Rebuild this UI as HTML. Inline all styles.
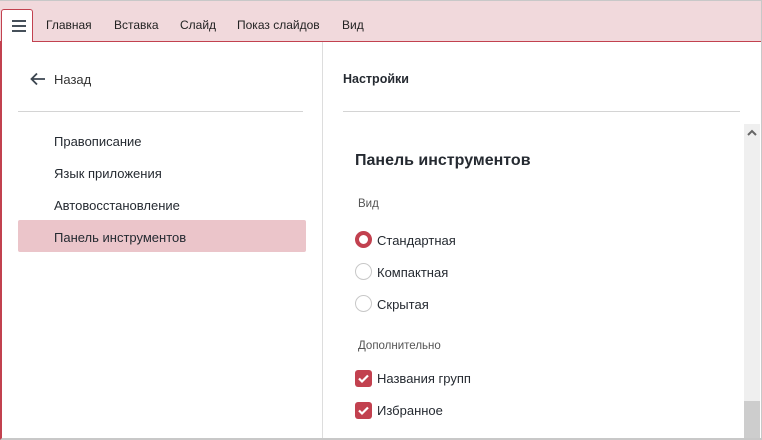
<!DOCTYPE html>
<html><head><meta charset="utf-8"><style>
*{margin:0;padding:0;box-sizing:border-box}
body{width:762px;height:440px;overflow:hidden;background:#fff;font-family:"Liberation Sans","DejaVu Sans",sans-serif;color:#252a31;position:relative}
.top{position:absolute;left:0;top:0;width:762px;height:42px;background:#f1d9dc;border-top:1px solid #c8c8c8;border-bottom:1px solid #c2414f}
.menu{position:absolute;left:1px;top:9px;width:32px;height:33px;background:#fff;border:1px solid #c2414f;border-bottom:none;border-radius:3px 3px 0 0}
.menu i{position:absolute;left:10px;width:14px;height:2px;background:#46505a}
.tab{position:absolute;top:18px;font-size:12px;color:#222}
.frame{position:absolute;left:0;top:42px;width:762px;height:398px;border-left:2px solid #c2414f;border-right:1px solid #c2414f;border-bottom:2px solid #c8c8c8}
.outer{position:absolute;right:0;top:0;width:1px;height:440px;background:#c8c8c8}
.vdiv{position:absolute;left:322px;top:42px;width:1px;height:396px;background:#ddd}
.hl{position:absolute;height:1px;background:#d4d4d4;top:111px}
.t{position:absolute;font-size:13px}
.sel{position:absolute;left:18px;top:220px;width:288px;height:32px;background:#ebc5ca;border-radius:2px}
.radio{position:absolute;left:355px;width:17px;height:17px;border-radius:50%;border:1px solid #c8c8c8;background:#fff}
.radio.on{border:4px solid #c2414f}
.cb{position:absolute;left:355px;width:17px;height:17px;border-radius:3px;background:#c2414f}
.sb{position:absolute;left:744px;top:124px;width:16px;height:314px;background:#efefef}
.thumb{position:absolute;left:744px;top:401px;width:16px;height:37px;background:#cdcdcd}
</style></head><body>
<div class="top"></div>
<div class="menu"><i style="top:10px"></i><i style="top:15px"></i><i style="top:20px"></i></div>
<div class="tab" style="left:46px">Главная</div>
<div class="tab" style="left:114px">Вставка</div>
<div class="tab" style="left:180px">Слайд</div>
<div class="tab" style="left:237px">Показ слайдов</div>
<div class="tab" style="left:342px">Вид</div>
<div class="frame"></div>
<div class="outer"></div>
<div class="vdiv"></div>
<svg style="position:absolute;left:30px;top:72px" width="16" height="14" viewBox="0 0 16 14"><path d="M15 7H2M7 1.5L1.5 7 7 12.5" fill="none" stroke="#3c4650" stroke-width="1.8"/></svg>
<div class="t" style="left:54px;top:72px;color:#333">Назад</div>
<div class="hl" style="left:18px;width:285px"></div>
<div class="t" style="left:343px;top:72px;font-weight:bold;font-size:12.5px">Настройки</div>
<div class="hl" style="left:343px;width:397px"></div>
<div class="sel"></div>
<div class="t" style="left:54px;top:134px">Правописание</div>
<div class="t" style="left:54px;top:166px">Язык приложения</div>
<div class="t" style="left:54px;top:198px">Автовосстановление</div>
<div class="t" style="left:54px;top:230px">Панель инструментов</div>
<div class="sb"></div>
<svg style="position:absolute;left:747px;top:129px" width="10" height="8" viewBox="0 0 10 8"><path d="M1 6L5 2 9 6" fill="none" stroke="#666" stroke-width="2"/></svg>
<div class="thumb"></div>
<div class="t" style="left:355px;top:152px;font-size:16px;font-weight:bold">Панель инструментов</div>
<div class="t" style="left:358px;top:198px;font-size:11.5px;color:#555">Вид</div>
<div class="radio on" style="top:231px"></div>
<div class="t" style="left:377px;top:233px">Стандартная</div>
<div class="radio" style="top:263px"></div>
<div class="t" style="left:377px;top:265px">Компактная</div>
<div class="radio" style="top:295px"></div>
<div class="t" style="left:377px;top:297px">Скрытая</div>
<div class="t" style="left:358px;top:340px;font-size:11.5px;color:#555">Дополнительно</div>
<div class="cb" style="top:370px"><svg width="17" height="17" viewBox="0 0 17 17"><path d="M4 8.5l3 3 6-6" fill="none" stroke="#fff" stroke-width="2.2"/></svg></div>
<div class="t" style="left:377px;top:371px">Названия групп</div>
<div class="cb" style="top:402px"><svg width="17" height="17" viewBox="0 0 17 17"><path d="M4 8.5l3 3 6-6" fill="none" stroke="#fff" stroke-width="2.2"/></svg></div>
<div class="t" style="left:377px;top:403px">Избранное</div>
</body></html>
